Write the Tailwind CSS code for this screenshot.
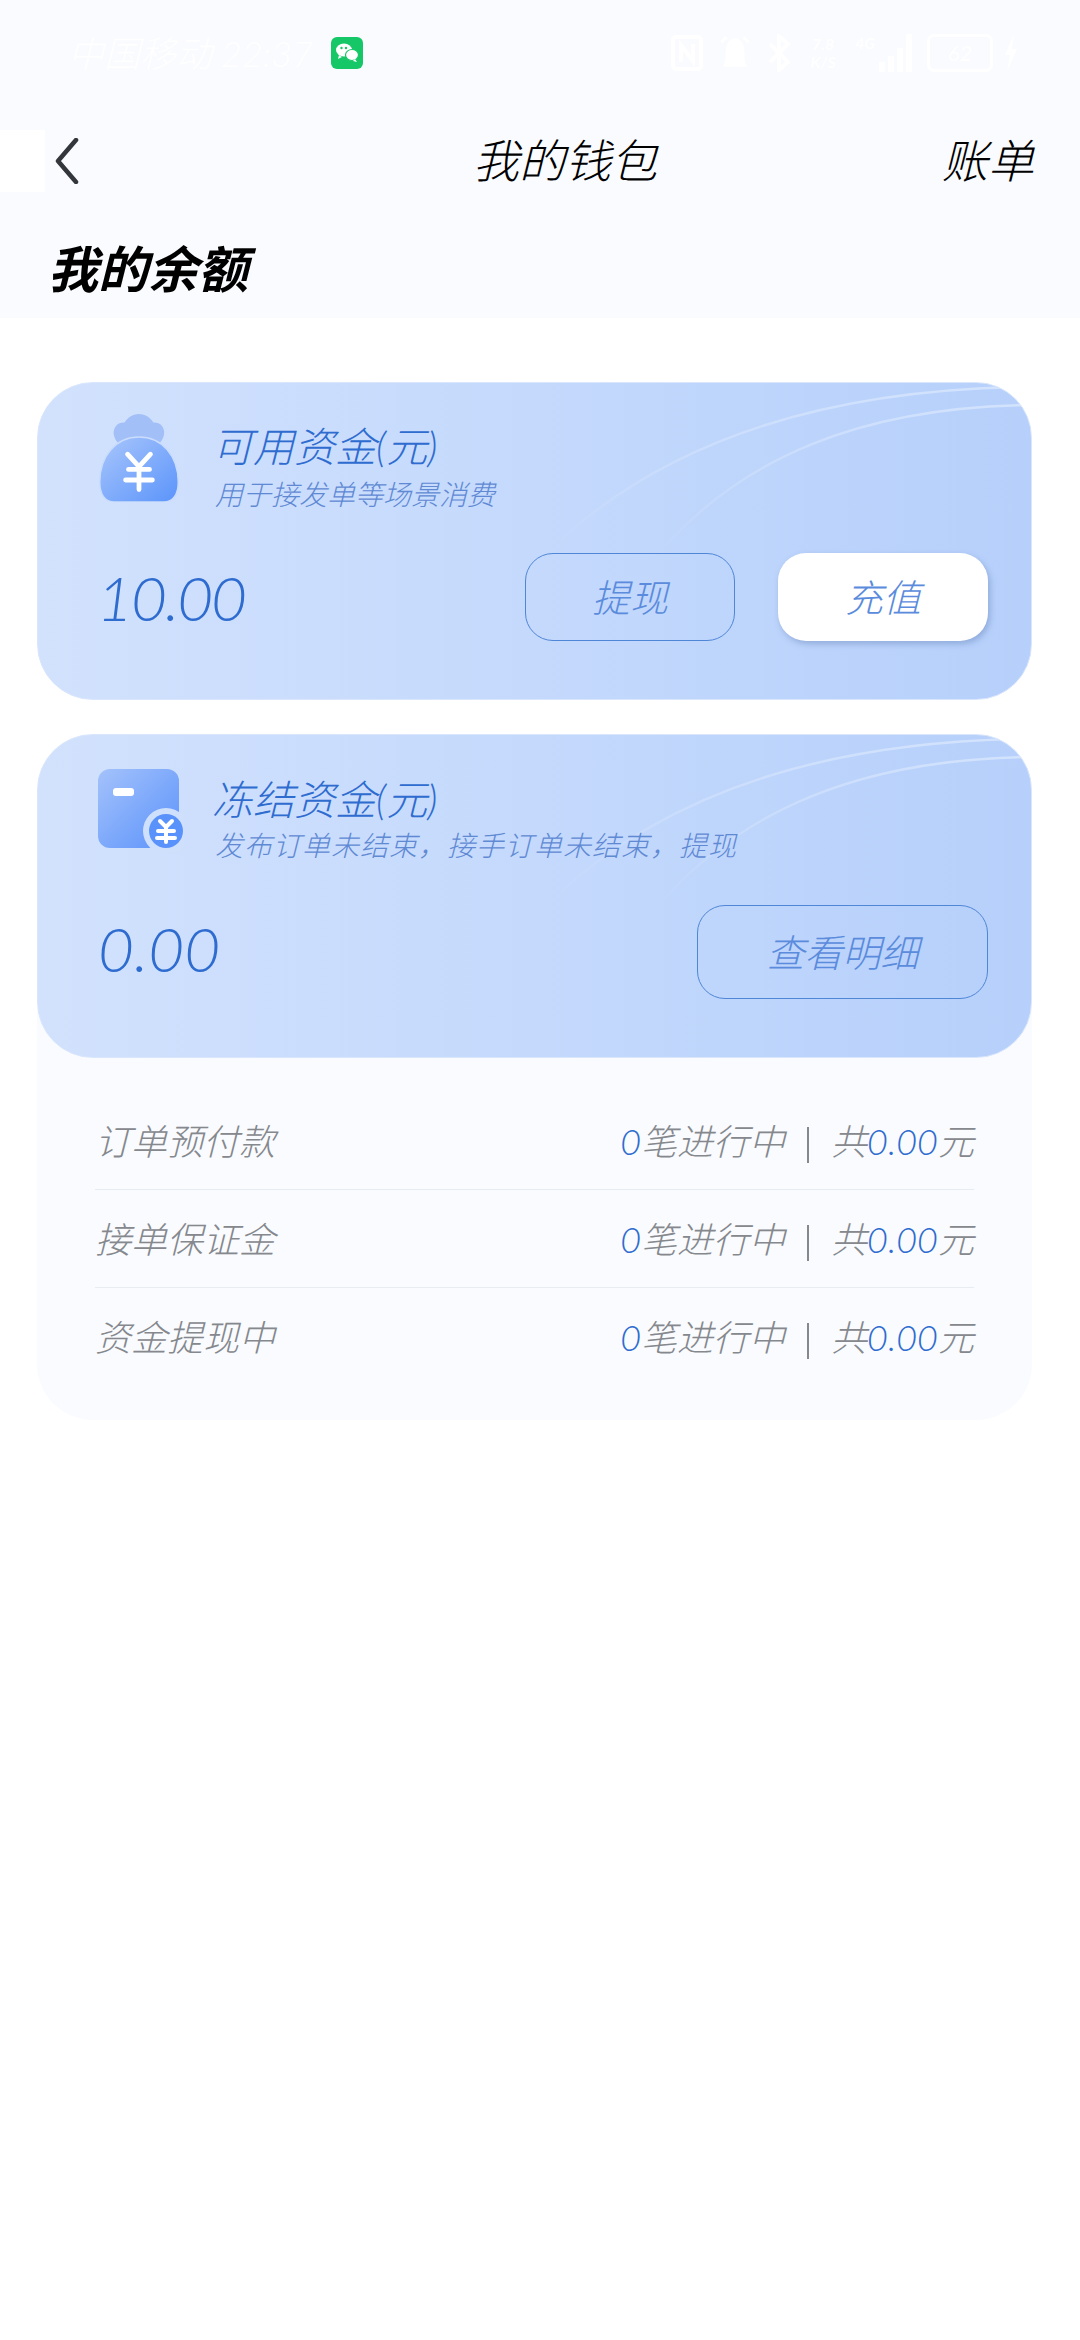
<!DOCTYPE html>
<html lang="zh">
<head>
<meta charset="utf-8">
<script src="https://cdn.jsdelivr.net/npm/@tailwindcss/browser@4"></script>
</head>
<body class="bg-white">
<div class="w-[1080px] h-[2340px] bg-white overflow-hidden font-['Lato','Noto_Sans_CJK_SC',sans-serif]">
  <header class="h-[318px] bg-[#f9fbff] flex flex-col">
    <div class="h-[130px] flex justify-between items-start pt-[32px] pl-[68px] pr-[62px] text-white font-light">
      <div class="flex items-center gap-[18px] text-[36px] leading-[42px]">
        <span class="italic">中国移动 22:37</span>
        <svg width="32" height="32" viewBox="0 0 32 32"><rect width="32" height="32" rx="6" fill="#16c767"/><ellipse cx="13" cy="13" rx="8" ry="6.5" fill="#fff"/><ellipse cx="21" cy="18" rx="6.5" ry="5.5" fill="#fff" stroke="#16c767" stroke-width="1.2"/><path d="M8 18l-1 4 4-2zM24 22l2 3-4-1z" fill="#fff"/><circle cx="10.5" cy="11" r="1.2" fill="#16c767"/><circle cx="15" cy="11" r="1.2" fill="#16c767"/></svg>
      </div>
      <div class="flex items-center gap-[15px] h-[40px] mt-[1px]">
        <svg width="32" height="36" viewBox="0 0 32 36" fill="none" stroke="#fff" stroke-width="4"><rect x="2" y="2" width="28" height="32" rx="3"/><path d="M10 27V10l12 16V9"/></svg>
        <svg width="34" height="38" viewBox="0 0 32 36" fill="#fff"><path d="M4 31c3-3 3-7 3-13C7 9 11 4 16 4s9 5 9 14c0 6 0 10 3 13z"/><path d="M3 8l5-5M29 8l-5-5" stroke="#fff" stroke-width="3"/></svg>
        <svg width="24" height="38" viewBox="0 0 24 38" fill="none" stroke="#fff" stroke-width="4"><path d="M3 10l18 18-9 8V2l9 8L3 28"/></svg>
        <span class="text-[16px] leading-[18px] font-bold w-[34px] text-center italic">7.8<br>K/S</span>
        <span class="relative flex items-end gap-[3px] h-[38px] pl-[24px]">
          <span class="absolute left-0 top-0 text-[16px] leading-[17px] font-bold italic">4G</span>
          <span class="w-[6px] h-[10px] bg-white"></span><span class="w-[6px] h-[16px] bg-white"></span><span class="w-[6px] h-[24px] bg-white"></span><span class="w-[6px] h-[38px] bg-white"></span>
        </span>
        <span class="w-[66px] h-[38px] rounded-[7px] border-[3px] border-white flex items-center justify-center text-[22px] leading-none font-normal italic">62</span>
        <svg class="-ml-[4px]" width="14" height="38" viewBox="0 0 14 38" fill="#fff"><path d="M10 0 1 21h5L3 38 13 15H8z"/></svg>
      </div>
    </div>
    <div class="h-[62px] flex items-center justify-between text-black text-[46px] leading-none font-light relative">
      <div class="flex items-center h-full">
        <span class="block w-[45px] h-full bg-white"></span>
        <svg class="ml-[10px]" width="24" height="46" viewBox="0 0 24 46" fill="none" stroke="#33363b" stroke-width="4.5" stroke-linecap="round" stroke-linejoin="round"><path d="M21 2 3 23l18 21"/></svg>
      </div>
      <h1 class="absolute left-[473px] italic">我的钱包</h1>
      <a class="pr-[46px] italic">账单</a>
    </div>
    <h2 class="ml-[48px] mt-[47px] text-[50px] leading-[60px] font-bold italic text-black">我的余额</h2>
  </header>

  <main class="pl-[37px] pr-[48px] pt-[64px] flex flex-col gap-[34px]">
    <section class="relative h-[318px] rounded-[56px] overflow-hidden border border-[#d9e6fc] bg-gradient-to-r from-[#d2e2fd] to-[#b6d0fb] pl-[62px] pr-[43px]">
      <svg class="absolute right-0 top-0" width="480" height="180" viewBox="0 0 480 180" fill="none" stroke-width="2.5">
        <defs><linearGradient id="a1" x1="0" y1="1" x2="1" y2="0"><stop offset="0" stop-color="#fff" stop-opacity="0"/><stop offset="1" stop-color="#fff" stop-opacity=".4"/></linearGradient></defs>
        <path d="M1 165C100 70 250 8 470 4" stroke="url(#a1)"/><path d="M108 170C190 75 310 24 480 22" stroke="url(#a1)"/>
      </svg>
      <div class="relative flex items-center h-[119px] pt-[28px] gap-[32px]">
        <svg width="82" height="88" viewBox="0 0 82 92" class="shrink-0 -ml-[2px] mt-[2px]">
          <defs><linearGradient id="b1" x1="0" y1="0" x2="1" y2="1"><stop offset="0" stop-color="#a9c6fb"/><stop offset="1" stop-color="#5b94fb"/></linearGradient></defs>
          <path d="M19 30C10 20 16 8 26 9c3-5 8-9 15-9s12 4 15 9c10-1 16 11 7 21z" fill="#a2bff8"/>
          <path d="M41 24c24 0 41 20 41 47 0 14-6 21-15 21H15C6 92 0 85 0 71c0-27 17-47 41-47z" fill="url(#b1)" stroke="#c9dcfc" stroke-width="1.5"/>
          <path d="M29 42l12 13 12-13M30 58h22M27 69h28M41 55v24" fill="none" stroke="#fff" stroke-width="5" stroke-linecap="round" stroke-linejoin="round"/>
        </svg>
        <div class="flex flex-col pt-[20px]">
          <div class="text-[41px] leading-[46px] font-light italic text-[#2f6cd0]">可用资金(元)</div>
          <div class="text-[28px] leading-[32px] mt-[8px] ml-[3px] font-light italic text-[#6089d4]">用于接发单等场景消费</div>
        </div>
      </div>
      <div class="relative flex items-center justify-between mt-[51px]">
        <div class="-ml-[3px] text-[62px] leading-none font-light italic tracking-[-2px] text-[#2f6cd0]">10.00</div>
        <div class="flex gap-[43px]">
          <button class="w-[210px] h-[88px] rounded-[28px] border border-[#4f86d6] text-[38px] font-light italic text-[#5a8bdc]">提现</button>
          <button class="w-[210px] h-[88px] rounded-[28px] bg-white shadow-[2px_3px_6px_rgba(70,100,160,0.35)] text-[38px] font-light italic text-[#5a8bdc]">充值</button>
        </div>
      </div>
    </section>

    <div class="relative h-[686px] rounded-[56px] bg-[#f9fbff]">
      <section class="relative h-[324px] rounded-[56px] overflow-hidden border border-[#d9e6fc] bg-gradient-to-r from-[#d2e2fd] to-[#b6d0fb] pl-[60px] pr-[43px]">
        <svg class="absolute right-0 top-0" width="480" height="180" viewBox="0 0 480 180" fill="none" stroke-width="2.5">
          <defs><linearGradient id="a2" x1="0" y1="1" x2="1" y2="0"><stop offset="0" stop-color="#fff" stop-opacity="0"/><stop offset="1" stop-color="#fff" stop-opacity=".4"/></linearGradient></defs>
          <path d="M1 165C100 70 250 8 470 4" stroke="url(#a2)"/><path d="M108 170C190 75 310 24 480 22" stroke="url(#a2)"/>
        </svg>
        <div class="relative flex items-center h-[119px] pt-[28px] gap-[28px]">
          <svg width="86" height="82" viewBox="0 0 86 82" class="shrink-0 mt-[2px]">
            <defs><linearGradient id="b2" x1="0" y1="0" x2="1" y2="1"><stop offset="0" stop-color="#a4c2fb"/><stop offset="1" stop-color="#5a92fb"/></linearGradient></defs>
            <rect width="81" height="79" rx="12" fill="url(#b2)"/>
            <rect x="15" y="19" width="21" height="8" rx="3" fill="#fff"/>
            <circle cx="68" cy="62" r="23" fill="#cfe0fc"/>
            <circle cx="68" cy="62" r="17" fill="#5a92fb"/>
            <path d="M62 52l6 6 6-6M60 62h16M59 69h18M68 58v15" fill="none" stroke="#fff" stroke-width="4" stroke-linecap="round" stroke-linejoin="round"/>
          </svg>
          <div class="flex flex-col pt-[20px]">
            <div class="text-[41px] leading-[46px] font-light italic text-[#2f6cd0]">冻结资金(元)</div>
            <div class="text-[28px] leading-[32px] mt-[6px] ml-[3px] tracking-[1px] font-light italic text-[#6089d4]">发布订单未结束，接手订单未结束，提现</div>
          </div>
        </div>
        <div class="relative flex items-center justify-between mt-[51px]">
          <div class="-mt-[8px] text-[62px] leading-none font-light italic text-[#2f6cd0]">0.00</div>
          <button class="w-[291px] h-[94px] rounded-[28px] border border-[#4f86d6] text-[38px] font-light italic text-[#5a8bdc]">查看明细</button>
        </div>
      </section>
      <div class="px-[58px] pt-[34px] text-[36px] font-light italic text-[#85888d]">
        <div class="h-[98px] flex items-center justify-between border-b border-[#e8edf3]">
          <span>订单预付款</span>
          <span class="flex items-center"><span class="text-[#2f6cd0]">0</span>笔进行中<span class="mx-[22px] mt-[8px] w-[2px] h-[36px] bg-[#85888d]"></span>共<span class="text-[#2f6cd0]">0.00</span>元</span>
        </div>
        <div class="h-[98px] flex items-center justify-between border-b border-[#e8edf3]">
          <span>接单保证金</span>
          <span class="flex items-center"><span class="text-[#2f6cd0]">0</span>笔进行中<span class="mx-[22px] mt-[8px] w-[2px] h-[36px] bg-[#85888d]"></span>共<span class="text-[#2f6cd0]">0.00</span>元</span>
        </div>
        <div class="h-[98px] flex items-center justify-between">
          <span>资金提现中</span>
          <span class="flex items-center"><span class="text-[#2f6cd0]">0</span>笔进行中<span class="mx-[22px] mt-[8px] w-[2px] h-[36px] bg-[#85888d]"></span>共<span class="text-[#2f6cd0]">0.00</span>元</span>
        </div>
      </div>
    </div>
  </main>
</div>
</body>
</html>
